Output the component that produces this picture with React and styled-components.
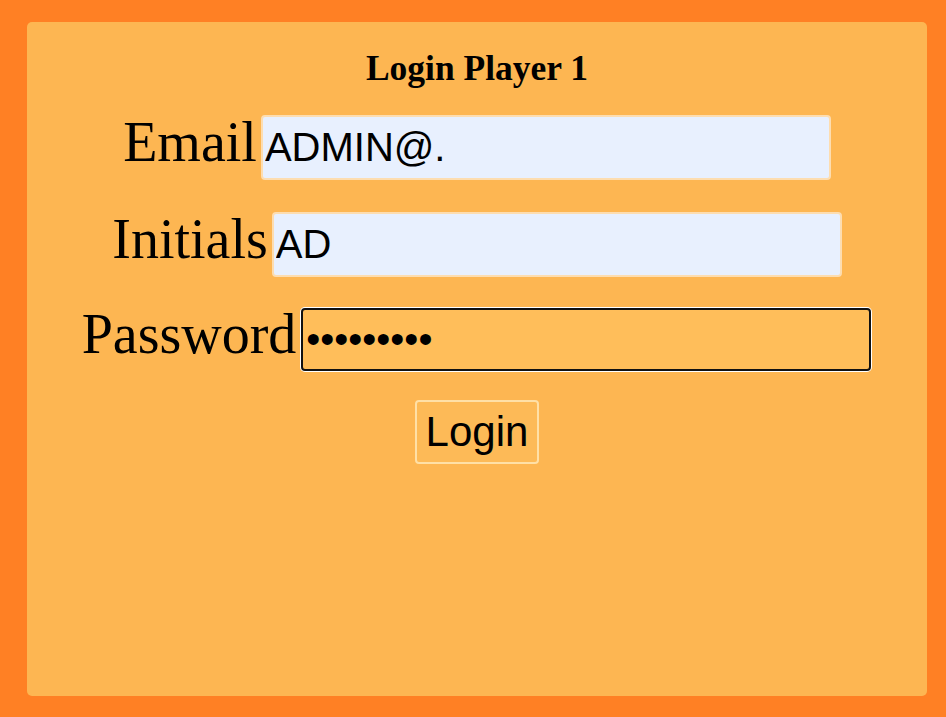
import React, { useState } from 'react';
import styled, { createGlobalStyle } from 'styled-components';

const GlobalStyle = createGlobalStyle`
  html, body {
    margin: 0;
    padding: 0;
    background-color: #ff8024;
  }
  body {
    font-family: "Liberation Serif", "Times New Roman", serif;
  }
`;

const Page = styled.div`
  box-sizing: border-box;
  width: 946px;
  height: 717px;
  padding: 22px 19px 21px 27px;
  background-color: #ff8024;
`;

const Card = styled.div`
  box-sizing: border-box;
  height: 100%;
  padding-top: 25px;
  border-radius: 5px;
  background-color: #fdb652;
  display: flex;
  flex-direction: column;
  align-items: center;
`;

const Title = styled.h2`
  margin: 0 0 21px 0;
  font-size: 35.5px;
  font-weight: bold;
  color: #000;
`;

const Row = styled.div`
  display: flex;
  align-items: baseline;
  justify-content: center;
  gap: 4px;
  margin-bottom: ${(props) => props.spacing || 27}px;
`;

const Label = styled.label`
  font-size: 56px;
  color: #000;
`;

const Field = styled.input`
  box-sizing: border-box;
  width: 570px;
  height: ${(props) => (props.active ? 63 : 65)}px;
  margin: ${(props) => (props.active ? '1px' : '0')};
  padding: 0 ${(props) => (props.active ? 3 : 2)}px;
  font-family: "Liberation Sans", Arial, sans-serif;
  font-size: 40px;
  color: #000;
  border-radius: 4px;
  border: 2px solid ${(props) => (props.active ? '#111' : '#fdddb0')};
  background-color: ${(props) => (props.active ? '#ffbe5a' : '#e8f0fe')};
  box-shadow: ${(props) => (props.active ? '0 0 0 1px #ffffff' : 'none')};
  outline: none;
  caret-color: #000;
`;

const Button = styled.button`
  box-sizing: border-box;
  height: 64px;
  padding: 0 9px;
  font-family: "Liberation Sans", Arial, sans-serif;
  font-size: 42px;
  color: #000;
  border: 2px solid #ffe0a6;
  border-radius: 4px;
  background-color: #fdba57;
  cursor: pointer;
`;

const App = () => {
  const [email, setEmail] = useState('ADMIN@.');
  const [initials, setInitials] = useState('AD');
  const [password, setPassword] = useState('123456789');

  return (
    <Page>
      <GlobalStyle />
      <Card>
        <Title>Login Player 1</Title>
        <Row>
          <Label>Email</Label>
          <Field type="text" value={email} onChange={(e) => setEmail(e.target.value)} />
        </Row>
        <Row spacing={25}>
          <Label>Initials</Label>
          <Field type="text" value={initials} onChange={(e) => setInitials(e.target.value)} />
        </Row>
        <Row spacing={28}>
          <Label>Password</Label>
          <Field
            active
            autoFocus
            type="password"
            value={password}
            onChange={(e) => setPassword(e.target.value)}
          />
        </Row>
        <Button>Login</Button>
      </Card>
    </Page>
  );
};

export default App;
